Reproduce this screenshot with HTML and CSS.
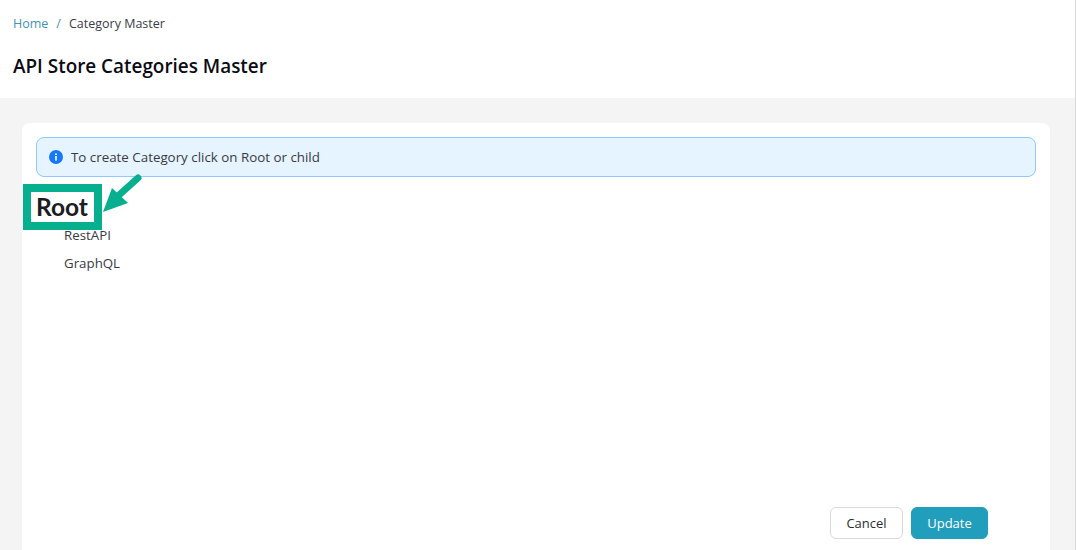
FILE: index.html
```html
<!DOCTYPE html>
<html lang="en">
<head>
<meta charset="utf-8">
<title>API Store Categories Master</title>
<link rel="stylesheet" href="styles.css">
</head>
<body>
<div class="page">
  <header class="header">
    <nav class="crumbs"><a class="crumb-link">Home</a><span class="crumb-sep">/</span><span class="crumb-current">Category Master</span></nav>
    <h1 class="title">API Store Categories Master</h1>
  </header>
  <main class="content">
    <section class="card">
      <div class="alert">
        <svg class="alert-icon" viewBox="0 0 14 14" width="14" height="14" aria-hidden="true"><circle cx="7" cy="7" r="7" fill="#1677ff"/><rect x="6.2" y="6" width="1.6" height="4.6" fill="#fff"/><rect x="6.2" y="3.4" width="1.6" height="1.6" fill="#fff"/></svg>
        <span>To create Category click on Root or child</span>
      </div>
      <div class="tree">
        <div class="root-box">Root</div>
        <svg class="arrow" viewBox="0 0 44 44" width="44" height="44" aria-hidden="true"><path d="M36 5 L17 22" stroke="#06b08f" stroke-width="7" stroke-linecap="round" fill="none"/><path d="M1 39 L10 15 L26 30 Z" fill="#06b08f"/></svg>
        <div class="nodes">
          <div class="node">RestAPI</div>
          <div class="node">GraphQL</div>
        </div>
      </div>
      <div class="actions">
        <button class="btn btn-cancel">Cancel</button>
        <button class="btn btn-update">Update</button>
      </div>
    </section>
  </main>
</div>
</body>
</html>
```
FILE: styles.css
```css
* { box-sizing: border-box; }
html, body { margin: 0; height: 550px; overflow: hidden; background: #fff; }
body { font-family: "Open Sans", "Noto Sans", sans-serif; color: #2b2b33; border-right: 1px solid #d9d9d9; }
.page { height: 550px; display: flex; flex-direction: column; background: #f4f4f4; }
.header { background: #fff; height: 98px; padding: 14px 13px 0; flex: none; }
.crumbs { font-size: 12.5px; line-height: 20px; display: flex; }
.crumb-link { color: #3f93b5; }
.crumb-sep { color: #3f93b5; margin: 0 8px; }
.crumb-current { color: #3c3c48; }
.title { margin: 18px 0 0; font-size: 18.9px; line-height: 28px; font-weight: 600; color: #0b0b14; }
.content { flex: 1; padding: 25px 25px 0 22px; min-height: 0; }
.card { background: #fff; border-radius: 8px 8px 0 0; height: 100%; padding: 14px 14px 0; display: flex; flex-direction: column; }
.alert { height: 40px; display: flex; align-items: center; gap: 8px; padding: 0 12px; background: #e6f4ff; border: 1px solid #91caff; border-radius: 8px; font-size: 13.35px; color: #3a3a44; }
.alert-icon { flex: none; }
.tree { position: relative; flex: none; height: 330px; }
.root-box { width: 79px; height: 46px; margin: 7px 0 0 -13px; border: 8px solid #06b08f; font-family: Lato, sans-serif; font-weight: 700; font-size: 24.5px; line-height: 30px; padding-left: 5px; color: #1c1c24; background: #fff; }
.arrow { position: absolute; left: 66px; top: -4px; }
.nodes { margin: -5px 0 0 28px; }
.node { font-size: 13.3px; line-height: 20px; margin-bottom: 8px; color: #3a3a44; }
.actions { display: flex; justify-content: flex-end; gap: 8px; padding-right: 48px; }
.btn { height: 32px; border-radius: 6px; font-family: inherit; font-size: 13px; padding: 0; }
.btn-cancel { width: 73px; background: #fff; border: 1px solid #d9d9d9; color: #2b2b33; }
.btn-update { width: 77px; background: #219ebc; border: 1px solid #219ebc; color: #fff; }
```
